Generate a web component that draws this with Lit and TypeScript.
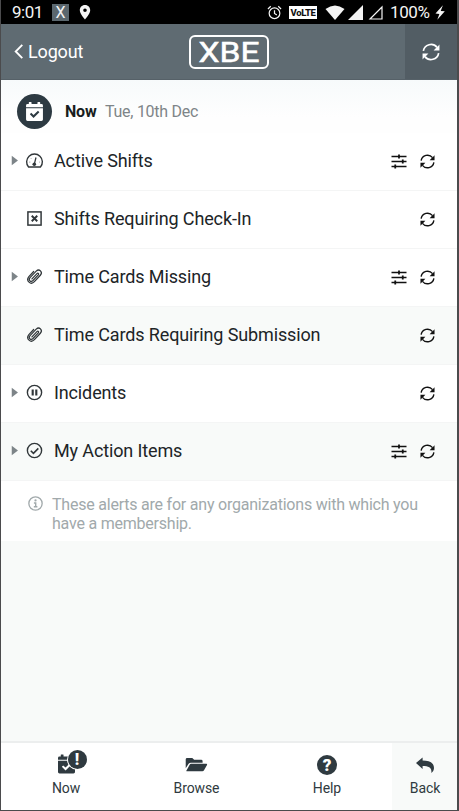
import { LitElement, html, svg, css } from "lit";
import { customElement, property } from "lit/decorators.js";

const glyphs: Record<string, unknown> = {
  refresh: svg`<path d="M1.2 7.1A6.9 6.9 0 0 1 13.4 3.9M14.8 8.9A6.9 6.9 0 0 1 2.6 12.1" fill="none" stroke="currentColor" stroke-width="1.5"/><path d="M15.5 1.4v5.2H10.3L12 4.9 13.8 3.3ZM.5 14.6V9.4H5.7L4 11.1 2.2 12.7Z"/>`,
  sliders: svg`<path d="M0 2.6h16M0 8h16M0 13.3h16" stroke="currentColor" stroke-width="1.7"/><path d="M8 .4v4.4M12 5.8v4.4M4 11.1v4.4" stroke="currentColor" stroke-width="1.9"/>`,
  gauge: svg`<path d="M2.4 14.1A7.4 7.4 0 1 1 13.6 14.1Z" fill="none" stroke="currentColor" stroke-width="1.3" stroke-linejoin="round"/><circle cx="7.8" cy="11.5" r="1.7"/><path d="M7.8 11.4 9.4 5.2" stroke="currentColor" stroke-width="1.2"/><path d="M3.2 9.5h.8M4.7 6l.5.5M12.4 9.5h.6" stroke="currentColor" stroke-width=".6"/>`,
  boxx: svg`<rect x="1.8" y="1.8" width="12.4" height="12.4" fill="none" stroke="currentColor" stroke-width="1.4"/><path d="M5.4 5.4 10.6 10.6M10.6 5.4 5.4 10.6" stroke="currentColor" stroke-width="1.8"/>`,
  clip: svg`<path d="M5.6 10.3 10.3 5.3c1-1 2.2.1 1.3 1.1L6.6 11.8c-2.1 2.1-4.8-.5-2.8-2.7L9.6 3C12.4 .2 16.2 3.8 13.5 6.8L7.9 12.9c-3.4 3.6-8.4-.9-5.2-4.8L7.2 3.3" fill="none" stroke="currentColor" stroke-width="1.15" stroke-linecap="round"/>`,
  pause: svg`<circle cx="8" cy="8" r="6.7" fill="none" stroke="currentColor" stroke-width="1.3"/><path d="M6.3 5.2v5.6M9.7 5.2v5.6" stroke="currentColor" stroke-width="2"/>`,
  check: svg`<circle cx="8" cy="8" r="6.7" fill="none" stroke="currentColor" stroke-width="1.3"/><path d="M4.5 8.2 7 10.6 11.6 6" fill="none" stroke="currentColor" stroke-width="1.5"/>`,
  info: svg`<circle cx="8" cy="8" r="7.1" fill="none" stroke="currentColor" stroke-width="1.4"/><circle cx="8" cy="4.7" r="1.2"/><path d="M6.3 7.4H8.2V11.2M6.2 11.4H10" fill="none" stroke="currentColor" stroke-width="1.5"/>`,
  back: svg`<path d="M0 6.1 6.6.4V3.6C13 3.6 18 5.6 18 10.9 18 13 16.8 14.8 15.3 15.9 16 10.6 13.2 8.9 6.6 8.9V12Z"/>`,
  caret: svg`<path d="M4 1 13 8 4 15Z"/>`,
  chevron: svg`<path d="M11.5 1 4.5 8l7 7" fill="none" stroke="currentColor" stroke-width="2"/>`,
  calendar: svg`<path d="M0 5V3.4Q0 2 1.4 2H2.6V.4Q2.6 0 3 0H4.8Q5.2 0 5.2.4V2H10.8V.4Q10.8 0 11.2 0H13Q13.4 0 13.4.4V2H14.6Q16 2 16 3.4V5Z"/><path fill-rule="evenodd" d="M0 6H16V16.6Q16 18 14.6 18H1.4Q0 18 0 16.6ZM3.6 11.6 7.1 15.1 12.6 9.6 11.3 8.3 7.1 12.4 4.9 10.3Z"/>`,
  folder: svg`<path d="M.5 12V2.5Q.5 1 2 1H7.5L9.5 3H17Q18.5 3 18.5 4.5V6H6Q4.4 6 3.6 7.3Z"/><path d="M1 15 4.7 8.2Q5.2 7.3 6.2 7.3H22.5Q23.8 7.3 23.2 8.5L20 14.2Q19.5 15.2 18.3 15.2H1.5Z"/>`,
  alarm: svg`<circle cx="8" cy="8.8" r="5.7" fill="none" stroke="currentColor" stroke-width="1.3"/><path d="M8 5.5V9L10.5 10.6M1 4.2 4 1.4M15 4.2 12 1.4" fill="none" stroke="currentColor" stroke-width="1.3"/>`,
  pin: svg`<path fill-rule="evenodd" d="M8 1C4.8 1 2.8 3.4 2.8 6.2 2.8 9.8 8 15.5 8 15.5S13.2 9.8 13.2 6.2C13.2 3.4 11.2 1 8 1ZM8 4.4A1.8 1.8 0 1 1 8 8 1.8 1.8 0 0 1 8 4.4Z"/>`,
  wifi: svg`<path d="M.5 4Q10 -3 19.5 4L10 15Z"/>`,
  signal: svg`<path d="M15 0V15H0Z"/>`,
  signalEmpty: svg`<path d="M14 2V14H2Z" fill="none" stroke="currentColor" stroke-width="1.2"/>`,
  bolt: svg`<path d="M8.3 0 .5 8.6 4.6 9 2.4 15 10.3 6.3 6 5.9Z"/>`,
};

@customElement("ui-glyph")
class UiGlyph extends LitElement {
  @property() name = "";
  @property({ type: Number }) w = 16;
  @property({ type: Number }) h = 16;
  @property() box = "0 0 16 16";
  static styles = css`
    :host { display: inline-flex; flex: none; }
    svg { display: block; fill: currentColor; overflow: visible; }
  `;
  render() {
    return html`<svg width=${this.w} height=${this.h} viewBox=${this.box}>${glyphs[this.name]}</svg>`;
  }
}

interface Row { label: string; icon: string; caret?: boolean; filter?: boolean; tint?: boolean }
const rows: Row[] = [
  { label: "Active Shifts", icon: "gauge", caret: true, filter: true },
  { label: "Shifts Requiring Check-In", icon: "boxx" },
  { label: "Time Cards Missing", icon: "clip", caret: true, filter: true },
  { label: "Time Cards Requiring Submission", icon: "clip", tint: true },
  { label: "Incidents", icon: "pause", caret: true },
  { label: "My Action Items", icon: "check", caret: true, filter: true, tint: true },
];

@customElement("app-root")
class AppRoot extends LitElement {
  static styles = css`
    :host { display: block; font-family: Roboto, "Liberation Sans", sans-serif; color: #202427; }
    * { box-sizing: border-box; }
    .frame { width: 459px; height: 811px; display: flex; flex-direction: column; background: #f8faf9;
      border: solid #4b4b4d; border-width: 0 2px 1px 1px; overflow: hidden; white-space: nowrap; }
    .status { height: 24px; flex: none; background: #000; color: #f4f4f4; display: flex; align-items: center; padding-left: 11px; font-size: 17px; line-height: 24px; }
    .time { width: 40px; letter-spacing: -.5px; }
    .appx { width: 17px; height: 17px; background: #5b676e; font-size: 16px; line-height: 17px; text-align: center; margin-right: 8px; }
    .sp { flex: 1; }
    .lte { background: #fff; color: #111; font-size: 9.5px; font-weight: 800; line-height: 14px; height: 13px; width: 28px; text-align: center; margin: 0 8px 0 7px; letter-spacing: -.4px; }
    .g4 { margin-left: 3px; }
    .g5 { margin-left: 5px; }
    .pct { margin-left: 7px; width: 41px; font-size: 17px; letter-spacing: -.4px; }
    .bolt { margin: 0 12px 0 4px; }
    .header { height: 56px; flex: none; display: grid; grid-template-columns: 188px 1fr 52px; background: #5f6b72; color: #fff; border-bottom: 1px solid #566168; }
    .logout { display: flex; align-items: center; padding-left: 10px; font-size: 18px; gap: 1px; letter-spacing: -.15px; }
    .brand { align-self: center; width: 80px; height: 34px; border: 2.5px solid #fff; border-radius: 6px; margin: 1px 0 0 0; display: flex; align-items: center; justify-content: center; }
    .word { font-size: 27.5px; font-weight: 400; line-height: 30px; transform: scaleX(1.22); display: block; letter-spacing: 0; padding-top: 2px; -webkit-text-stroke: .5px #fff; }
    .reload { background: #525d64; display: flex; align-items: center; justify-content: center; }
    .today { height: 53px; flex: none; background: linear-gradient(#f7fafb, #fefefe 70%); display: flex; align-items: center; padding: 9px 0 0 16px; }
    .disc { width: 35px; height: 35px; border-radius: 50%; background: #2d3a42; color: #fff; display: flex; align-items: center; justify-content: center; margin-right: 13px; }
    .now { font-size: 16px; font-weight: 700; width: 40px; color: #191d20; letter-spacing: -.2px; }
    .date { font-size: 16px; color: #7e8588; letter-spacing: -.27px; }
    .row { height: 58px; flex: none; display: flex; align-items: center; background: #fff; border-bottom: 1px solid #f4f5f5; padding: 0 22px 2px 8px; }
    .tint { background: #f8faf9; }
    .caret { width: 11px; color: #7d8488; display: flex; margin-right: 6px; }
    .kind { color: #303639; display: flex; width: 28px; }
    .label { font-size: 18px; line-height: 24px; flex: 1; letter-spacing: -.13px; }
    .tools { display: flex; gap: 13px; align-items: center; color: #111; padding-top: 1px; }
    .note { height: 60px; flex: none; background: #fff; color: #a1a9ab; display: flex; padding: 14px 0 0 27px; gap: 9px; font-size: 16px; line-height: 19px; letter-spacing: -.22px; }
    .note ui-glyph { padding-top: 1px; }
    .fill { flex: 1; }
    .nav { height: 69px; flex: none; display: grid; grid-template-columns: 130px 131px 130px 65px; background: #fff; border-top: 2px solid #eceeee; color: #2f3a40; }
    .tab { display: flex; flex-direction: column; align-items: center; font-size: 14px; line-height: 18px; padding-top: 8px; letter-spacing: -.1px; }
    .pic { height: 27px; display: flex; align-items: center; position: relative; margin-bottom: 1px; }
    .tab.last { background: #f8faf9; padding-left: 1px; }
    .cal { margin-top: -1px; }
    .badge { position: absolute; left: 10px; top: -1px; width: 19px; height: 19px; border-radius: 50%; background: #2f3a40; color: #fff; box-shadow: 0 0 0 1px #fff; font-size: 16px; font-weight: 900; line-height: 19px; text-align: center; }
    .help { width: 20px; height: 20px; border-radius: 50%; background: #2f3a40; color: #fff; font-size: 17px; font-weight: 900; line-height: 20px; text-align: center; margin-top: 1px; }
  `;

  render() {
    return html`<div class="frame">
      <div class="status">
        <span class="time">9:01</span><span class="appx">X</span><ui-glyph name="pin"></ui-glyph>
        <span class="sp"></span>
        <ui-glyph name="alarm" w="15" h="15"></ui-glyph><span class="lte">VoLTE</span>
        <ui-glyph name="wifi" w="20" h="15" box="0 0 20 15"></ui-glyph>
        <ui-glyph class="g4" name="signal" w="15" h="15" box="0 0 15 15"></ui-glyph>
        <ui-glyph class="g5" name="signalEmpty" w="15" h="15" box="0 0 15 15"></ui-glyph>
        <span class="pct">100%</span><ui-glyph class="bolt" name="bolt" w="10" h="15" box="0 0 10.5 15"></ui-glyph>
      </div>
      <div class="header">
        <div class="logout"><ui-glyph name="chevron" w="16" h="15"></ui-glyph><span>Logout</span></div>
        <div class="brand"><span class="word">XBE</span></div>
        <div class="reload"><ui-glyph name="refresh" w="18" h="18"></ui-glyph></div>
      </div>
      <div class="today">
        <div class="disc"><ui-glyph name="calendar" w="17" h="19" box="0 0 16 18"></ui-glyph></div>
        <span class="now">Now</span><span class="date">Tue, 10th Dec</span>
      </div>
      ${rows.map((r) => html`<div class="row ${r.tint ? "tint" : ""}">
        <span class="caret">${r.caret ? html`<ui-glyph name="caret" w="11" h="11"></ui-glyph>` : ""}</span>
        <span class="kind"><ui-glyph name=${r.icon} w="17" h="17"></ui-glyph></span>
        <span class="label">${r.label}</span>
        <span class="tools">${r.filter ? html`<ui-glyph name="sliders" w="16" h="15"></ui-glyph>` : ""}<ui-glyph name="refresh" w="15" h="15"></ui-glyph></span>
      </div>`)}
      <div class="note"><ui-glyph name="info" w="15" h="15"></ui-glyph><span>These alerts are for any organizations with which you<br>have a membership.</span></div>
      <div class="fill"></div>
      <div class="nav">
        <div class="tab"><div class="pic"><ui-glyph class="cal" name="calendar" w="17" h="20" box="0 0 16 18"></ui-glyph><span class="badge">!</span></div><span>Now</span></div>
        <div class="tab"><div class="pic"><ui-glyph name="folder" w="23" h="15" box="0 0 24 16"></ui-glyph></div><span>Browse</span></div>
        <div class="tab"><div class="pic"><span class="help">?</span></div><span>Help</span></div>
        <div class="tab last"><div class="pic"><ui-glyph name="back" w="18" h="16" box="0 0 18 16"></ui-glyph></div><span>Back</span></div>
      </div>
    </div>`;
  }
}
